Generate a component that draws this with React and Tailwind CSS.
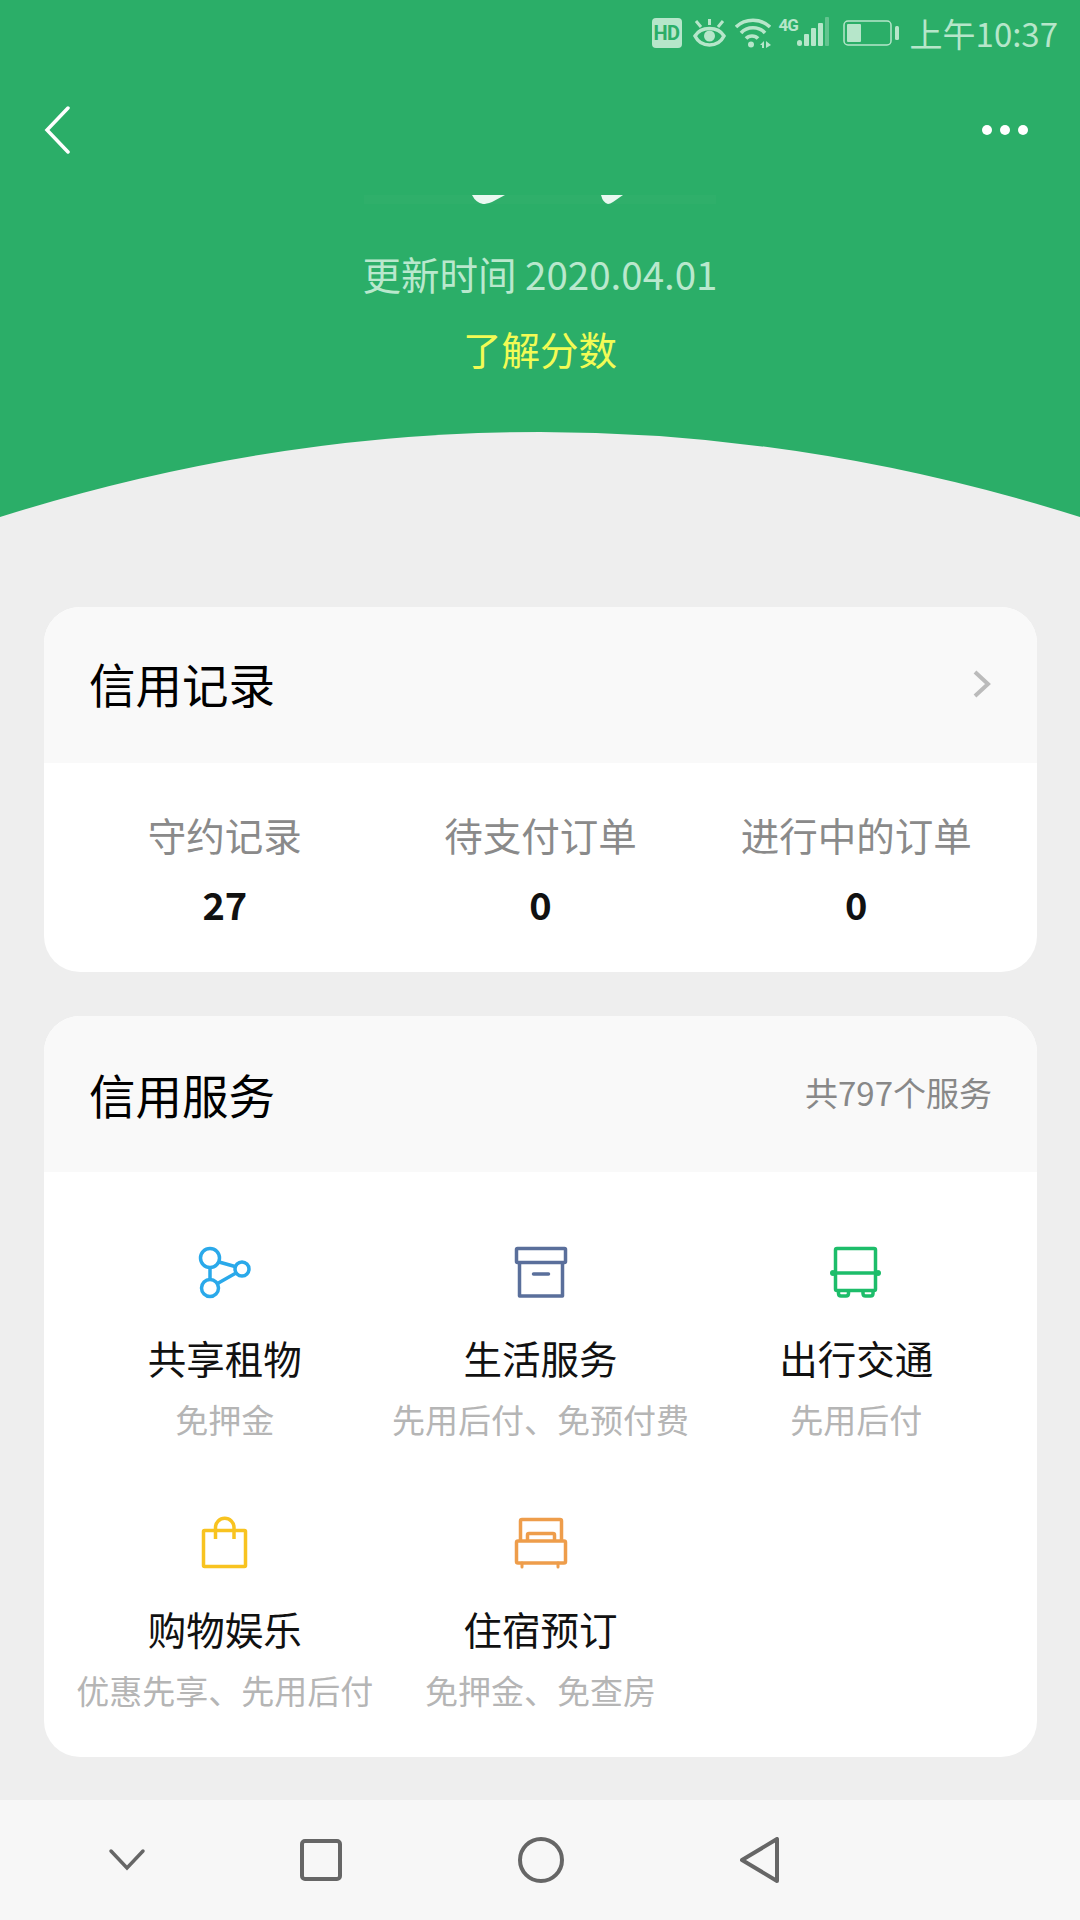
const font = 'font-["Noto_Sans_CJK_SC","Noto_Sans",sans-serif]';

const StatusIcons = () => (
  <div className="flex items-center h-[66px] justify-end pr-[22px] text-[#b6e6ca]">
    <div className="w-[30px] h-[30px] rounded-[4px] bg-[#b6e6ca] text-[#2bae68] text-[20px] leading-[30px] font-bold text-center tracking-[-0.5px] font-['Roboto',sans-serif]">
      HD
    </div>
    <svg className="ml-[11px]" width="33" height="30" viewBox="0 0 33 30" fill="none" stroke="#b6e6ca" strokeWidth="3.500">
      <path d="M2 18 C8 8 25 8 31 18 C25 30 8 30 2 18 Z" />
      <circle cx="16.500" cy="18" r="5.500" fill="#b6e6ca" stroke="none" />
      <path d="M3 3 L8 9 M16.500 1 L16.500 7 M30 3 L25 9" strokeWidth="3" />
    </svg>
    <svg className="ml-[9px]" width="36" height="30" viewBox="0 0 36 30" fill="none" stroke="#b6e6ca" strokeWidth="3.500">
      <path d="M1 9 C10 0 26 0 35 9" />
      <path d="M6 15 C12 8 24 8 30 15" />
      <path d="M11 20.500 C14 17 20 17 23 20.500" />
      <circle cx="16" cy="26.500" r="3" fill="#b6e6ca" stroke="none" />
      <path d="M25 27 L29 23 L29 30 L27 30 L27 27 Z M31 23 L36 27 L31 30 Z" fill="#b6e6ca" stroke="none" />
    </svg>
    <div className="relative w-[50px] h-[32px] ml-[8px]">
      <span className="absolute left-0 top-[-2px] text-[17px] leading-[20px] font-bold tracking-[-1px] font-['Roboto',sans-serif]">4G</span>
      <svg className="absolute right-0 top-0" width="32" height="32" viewBox="0 0 32 32" fill="#b6e6ca">
        <rect x="0" y="23" width="5" height="6" rx="2.500" />
        <rect x="7" y="17" width="5" height="12" rx="1" />
        <rect x="14" y="11" width="5" height="18" rx="1" />
        <rect x="21" y="6" width="5" height="23" rx="1" />
        <rect x="28" y="0" width="4" height="29" rx="1" opacity="0.4" />
      </svg>
    </div>
    <svg className="ml-[14px]" width="56" height="26" viewBox="0 0 56 26" fill="none">
      <rect x="1" y="1" width="47" height="24" rx="4" stroke="#b6e6ca" strokeWidth="1.500" />
      <rect x="4" y="4" width="14" height="18" rx="1" fill="#b6e6ca" />
      <rect x="52" y="6" width="4" height="14" rx="1.500" fill="#b6e6ca" />
    </svg>
    <span className={`ml-[11px] text-[33px] leading-[40px] ${font}`}>上午10:37</span>
  </div>
);

const SharedIcon = () => (
  <svg width="56" height="56" viewBox="0 0 56 56" fill="none" stroke="#2aa9ea" strokeWidth="3.500">
    <circle cx="13" cy="14" r="9.500" />
    <circle cx="13" cy="44" r="8.500" />
    <circle cx="45" cy="25" r="7" />
    <path d="M13 24 V35 M22 18 L38 22.500 M20.500 39.500 L39 29" />
  </svg>
);

const BoxIcon = () => (
  <svg width="56" height="56" viewBox="0 0 56 56" fill="none" stroke="#5a6f9b" strokeWidth="3.500" strokeLinejoin="round">
    <rect x="4.500" y="4.500" width="49" height="14" rx="1" />
    <path d="M7.500 18.500 V52 H50.500 V18.500" />
    <path d="M21.500 30 H36.500" strokeLinecap="round" />
  </svg>
);

const BusIcon = () => (
  <svg width="56" height="56" viewBox="0 0 56 56" fill="none" stroke="#1dbd6a" strokeWidth="3.500" strokeLinejoin="round">
    <rect x="7.500" y="4.500" width="40" height="42" rx="1.500" />
    <path d="M7.500 29 H47.500" />
    <circle cx="5" cy="29" r="3" fill="#1dbd6a" stroke="none" />
    <circle cx="50" cy="29" r="3" fill="#1dbd6a" stroke="none" />
    <path d="M10.500 47 V49.500 Q10.500 52 13 52 H18 Q20.500 52 20.500 49.500 V47" />
    <path d="M35 47 V49.500 Q35 52 37.500 52 H42.500 Q45 52 45 49.500 V47" />
  </svg>
);

const BagIcon = () => (
  <svg width="56" height="56" viewBox="0 0 56 56" fill="none" stroke="#f8c320" strokeWidth="3.500" strokeLinejoin="round">
    <rect x="6.500" y="15.500" width="42" height="36" rx="1" />
    <path d="M18.500 24 V12.500 A9.250 9.250 0 0 1 37 12.500 V24" />
  </svg>
);

const BedIcon = () => (
  <svg width="56" height="56" viewBox="0 0 56 56" fill="none" stroke="#ee9d4b" strokeWidth="3.500" strokeLinejoin="round">
    <path d="M8.500 26 V6 Q8.500 4.500 10 4.500 H48 Q49.500 4.500 49.500 6 V26" />
    <path d="M15.500 26 V20 Q15.500 18.500 17 18.500 H41 Q42.500 18.500 42.500 20 V26" />
    <rect x="4.500" y="26" width="49" height="22" rx="1.500" />
    <path d="M10 48 V52 M46 48 V52" strokeWidth="3" strokeLinecap="round" />
  </svg>
);

const services = [
  { icon: <SharedIcon />, title: '共享租物', sub: '免押金' },
  { icon: <BoxIcon />, title: '生活服务', sub: '先用后付、免预付费' },
  { icon: <BusIcon />, title: '出行交通', sub: '先用后付' },
  { icon: <BagIcon />, title: '购物娱乐', sub: '优惠先享、先用后付' },
  { icon: <BedIcon />, title: '住宿预订', sub: '免押金、免查房' },
];

const records = [
  { label: '守约记录', value: '27' },
  { label: '待支付订单', value: '0' },
  { label: '进行中的订单', value: '0' },
];

export default function App() {
  return (
    <div className={`w-[1080px] h-[1920px] bg-[#eeeeee] flex flex-col overflow-hidden ${font}`}>
      <header className="relative h-[517px] bg-[#2bae68] shrink-0">
        <StatusIcons />

        <div className="flex items-center justify-between h-[80px] mt-[24px] pl-[44px] pr-[52px]">
          <svg width="28" height="48" viewBox="0 0 28 48" fill="none" stroke="#ffffff" strokeWidth="3.500" strokeLinecap="round">
            <path d="M24 2 L3 24 L24 46" />
          </svg>
          <div className="flex gap-[8px]">
            <div className="w-[10px] h-[10px] rounded-full bg-white" />
            <div className="w-[10px] h-[10px] rounded-full bg-white" />
            <div className="w-[10px] h-[10px] rounded-full bg-white" />
          </div>
        </div>

        {/* score digits clipped by the scroll edge */}
        <svg className="block mx-auto mt-[25px]" width="352" height="9" viewBox="0 0 352 9">
          <rect width="352" height="9" fill="#ffffff" opacity="0.02" />
          <path d="M108 0 H141 L128 7 Q122 9 119 9 Q112 8 108 0 Z" fill="#e9f8f0" />
          <path d="M237 0 H259 L249 7 Q246 9 244 9 Q239 8 237 0 Z" fill="#e9f8f0" />
        </svg>

        <p className="mt-[44px] text-center text-[38.500px] leading-[50px] text-[#b9e8cd]">更新时间 2020.04.01</p>
        <p className="mt-[25px] text-center text-[38.500px] leading-[50px] text-[#f2fb55]">了解分数</p>

        <svg className="absolute left-0 bottom-0" width="1080" height="85" viewBox="0 0 1080 85">
          <path d="M0 85 Q540 -85 1080 85 Z" fill="#eeeeee" />
        </svg>
      </header>

      <section className="mt-[90px] ml-[44px] w-[993px] rounded-[36px] overflow-hidden bg-white">
        <div className="h-[156px] bg-[#f9f9f9] flex items-center justify-between pl-[45px] pr-[46px]">
          <h2 className="mb-[4px] text-[46.500px] leading-[60px] text-black">信用记录</h2>
          <svg className="mb-[2px]" width="18" height="28" viewBox="0 0 18 28" fill="none" stroke="#bbbbbb" strokeWidth="4">
            <path d="M2 2 L15 14 L2 26" />
          </svg>
        </div>
        <div className="grid grid-cols-3 px-[23px] pt-[46px] pb-[43px]">
          {records.map((r) => (
            <div key={r.label} className="text-center">
              <p className="text-[38.500px] leading-[50px] text-[#8a8a8a] whitespace-nowrap">{r.label}</p>
              <p className="mt-[20px] text-[38px] leading-[50px] font-bold text-[#111111]">{r.value}</p>
            </div>
          ))}
        </div>
      </section>

      <section className="mt-[44px] ml-[44px] w-[993px] rounded-[36px] overflow-hidden bg-white">
        <div className="h-[156px] bg-[#f9f9f9] flex items-center justify-between pl-[45px] pr-[45px]">
          <h2 className="mb-[1px] text-[46.500px] leading-[60px] text-black">信用服务</h2>
          <span className="mb-[4px] text-[33px] leading-[44px] text-[#888888]">共797个服务</span>
        </div>
        <div className="grid grid-cols-3 gap-y-[75px] px-[23px] pt-[72px] pb-[46px]">
          {services.map((s) => (
            <div key={s.title} className="h-[196px] flex flex-col items-center">
              {s.icon}
              <p className="mt-[34px] text-[38.500px] leading-[46px] text-[#111111]">{s.title}</p>
              <p className="mt-[19px] text-[33px] leading-[40px] text-[#b5b5b5] whitespace-nowrap">{s.sub}</p>
            </div>
          ))}
        </div>
      </section>

      <nav className="mt-auto h-[120px] bg-[#f7f7f7] flex items-center pl-[108px]">
        <svg width="38" height="24" viewBox="0 0 38 24" fill="none" stroke="#666666" strokeWidth="3.500" strokeLinecap="round">
          <path d="M3 3 L19 20 L35 3" />
        </svg>
        <svg className="ml-[154px]" width="42" height="42" viewBox="0 0 42 42" fill="none" stroke="#666666" strokeWidth="4">
          <rect x="2" y="2" width="38" height="38" rx="3" />
        </svg>
        <svg className="ml-[176px]" width="46" height="46" viewBox="0 0 46 46" fill="none" stroke="#666666" strokeWidth="4">
          <circle cx="23" cy="23" r="21" />
        </svg>
        <svg className="ml-[176px]" width="40" height="46" viewBox="0 0 40 46" fill="none" stroke="#666666" strokeWidth="4" strokeLinejoin="round">
          <path d="M37 2 V44 L2 23 Z" />
        </svg>
      </nav>
    </div>
  );
}
